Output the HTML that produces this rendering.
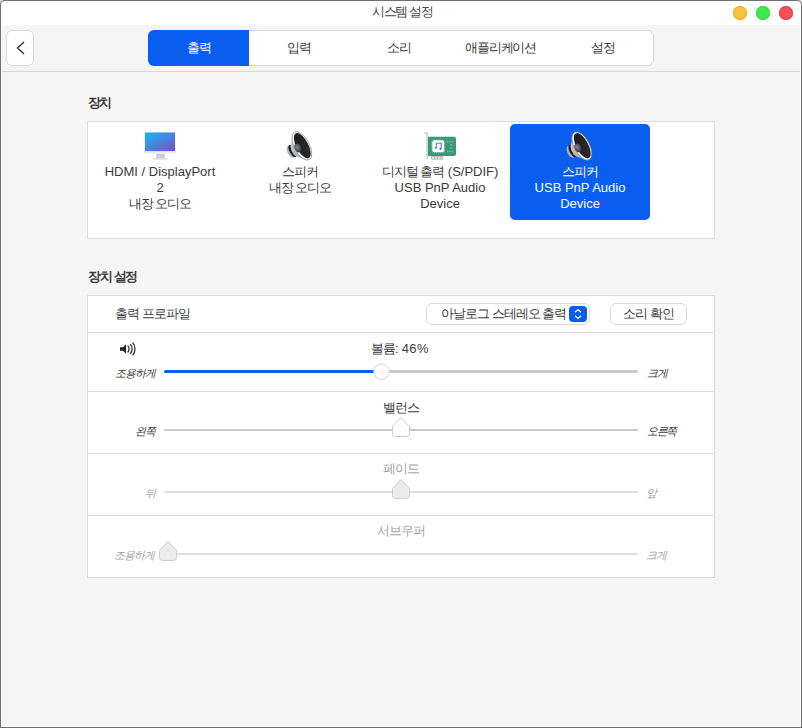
<!DOCTYPE html>
<html lang="ko">
<head>
<meta charset="utf-8">
<style>
*{box-sizing:border-box;margin:0;padding:0}
html,body{width:802px;height:728px;overflow:hidden;background:#d9d9d9}
body{font-family:"Liberation Sans",sans-serif;font-size:13px;color:#3a3a3a;position:relative}
.abs{position:absolute}
.t{position:absolute;white-space:nowrap;line-height:16px}
.k{letter-spacing:-1px}
.win{position:absolute;left:0;top:0;width:802px;height:728px;background:#707070;border-radius:5px 5px 0 0;overflow:hidden}
.inner{position:absolute;left:1px;top:1px;width:800px;height:726px;background:#fff;border-radius:4px 4px 0 0}
.content{position:absolute;left:2px;top:25px;width:798px;height:701px;background:#f5f5f5}
.dot{position:absolute;top:6px;width:14px;height:14px;border-radius:50%}
.hline{position:absolute;left:2px;top:71px;width:798px;height:1px;background:#d6d6d6}
.back{position:absolute;left:6px;top:30px;width:28px;height:36px;background:#fff;border:1px solid #dadada;border-radius:6px}
.tabs{position:absolute;left:148px;top:30px;width:506px;height:36px;background:#fff;border:1px solid #dadada;border-radius:6px;overflow:hidden}
.tabon{position:absolute;left:148px;top:30px;width:101px;height:36px;background:#095ef0;border-radius:6px 0 0 6px}
.box{position:absolute;left:87px;width:628px;background:#fff;border:1px solid #dcdcdc}
.sel{position:absolute;left:510px;top:124px;width:140px;height:96px;border-radius:5px;background:#095ef0}
.c{text-align:center}
.sep{position:absolute;left:88px;width:626px;height:1px;background:#dcdcdc}
.trk{position:absolute;left:164px;width:474px;border-radius:2px}
.gray{color:#a3a3a3}
.it{font-style:italic}
</style>
</head>
<body>
<div class="win">
 <div class="inner"></div>
 <div class="content"></div>
</div>
<div class="hline"></div>

<!-- title bar -->
<div class="t" style="left:372px;top:4px;font-size:13px;color:#4a4a4a;letter-spacing:-1.3px">시스템 설정</div>
<div class="dot" style="left:733px;background:#f8c13b;box-shadow:inset 0 0 0 1px #eeae2b"></div>
<div class="dot" style="left:756px;background:#3de84c;box-shadow:inset 0 0 0 1px #35d844"></div>
<div class="dot" style="left:779px;background:#f4505b;box-shadow:inset 0 0 0 1px #e6434e"></div>

<!-- header -->
<div class="back">
 <svg class="abs" style="left:-1px;top:-1px" width="28" height="36" viewBox="0 0 28 36"><path d="M18 12 L11.5 18 L18 24" fill="none" stroke="#2c2c2c" stroke-width="1.3" stroke-linecap="butt" stroke-linejoin="miter"/></svg>
</div>
<div class="tabs"></div><div class="tabon"></div>
<div class="t k c" style="left:148px;width:101px;top:40px;color:#fff">출력</div>
<div class="t k c" style="left:248px;width:101px;top:40px">입력</div>
<div class="t k c" style="left:348px;width:101px;top:40px">소리</div>
<div class="t c" style="left:450px;width:101px;top:40px;letter-spacing:-1.25px">애플리케이션</div>
<div class="t k c" style="left:552px;width:101px;top:40px">설정</div>

<!-- devices -->
<div class="t" style="left:88px;top:95px;font-weight:bold;letter-spacing:-2.2px">장치</div>
<div class="box" style="top:121px;height:118px"></div>
<div class="sel"></div>


<!-- device icons -->
<svg class="abs" style="left:0;top:0" width="802" height="728" viewBox="0 0 802 728">
 <defs>
  <linearGradient id="scr" x1="0" y1="0" x2="1" y2="1">
   <stop offset="0" stop-color="#16b6f6"/><stop offset="1" stop-color="#7c4fc6"/>
  </linearGradient>
  <linearGradient id="note" x1="0" y1="0" x2="1" y2="1">
   <stop offset="0" stop-color="#1aa6f4"/><stop offset="1" stop-color="#8a4ccc"/>
  </linearGradient>
  <radialGradient id="dome" cx="0.4" cy="0.4" r="0.7">
   <stop offset="0" stop-color="#85878b"/><stop offset="0.6" stop-color="#4c4e52"/><stop offset="1" stop-color="#26262a"/>
  </radialGradient>
  <linearGradient id="body" x1="0" y1="0" x2="1" y2="1">
   <stop offset="0" stop-color="#d0d2d8"/><stop offset="1" stop-color="#9fa1a8"/>
  </linearGradient>
  <symbol id="spk" viewBox="0 0 32 34">
   <ellipse cx="6.9" cy="23.8" rx="3.5" ry="6.5" transform="rotate(-28 6.9 23.8)" fill="#b3b5bc"/>
   <ellipse cx="8.4" cy="23" rx="2.9" ry="6.7" transform="rotate(-28 8.4 23)" fill="#1e1e20"/>
   <path d="M5.64 18.82 L8.15 7.73 L21.48 31.82 L11.30 28.41 Q10.0 27.8 8.6 26.2 Q6.2 22.8 5.64 18.82Z" fill="url(#body)" transform="translate(0.9 0)"/>
   <ellipse cx="17.8" cy="17.9" rx="7.6" ry="15.6" transform="rotate(-28 17.8 17.9)" fill="#f3f3f3" stroke="#8c8e94" stroke-width="0.7"/>
   <ellipse cx="18.3" cy="17.7" rx="6" ry="13.9" transform="rotate(-28 18.3 17.7)" fill="url(#cone)"/>
   <ellipse cx="14" cy="19.8" rx="3.4" ry="4.6" transform="rotate(-28 14 19.8)" fill="url(#dome)"/>
  </symbol>
  <linearGradient id="cone" x1="0" y1="0" x2="1" y2="1">
   <stop offset="0" stop-color="#19191b"/><stop offset="1" stop-color="#2e2e31"/>
  </linearGradient>
 </defs>
 <!-- monitor -->
 <rect x="144.3" y="131.8" width="31.4" height="22" rx="1.2" fill="#ececf0"/>
 <rect x="145" y="132.5" width="30" height="18.6" fill="url(#scr)"/>
 <rect x="156.2" y="153.7" width="8.8" height="4.4" fill="#cdd0d7"/>
 <rect x="153.2" y="158" width="14.5" height="1.8" rx="0.8" fill="#dcdee3"/>
 <!-- speakers -->
 <use href="#spk" x="284" y="128" width="32" height="34"/>
 <use href="#spk" x="564" y="128" width="32" height="34"/>
 <!-- sound card -->
 <path d="M424 132.2 H428 V159 H426.2 V134 H424 Z" fill="#d3d3da"/>
 <path d="M428 136.7 H454 Q456 136.7 456 138.7 V154 Q456 156 454 156 H428 Z" fill="#3b987a"/>
 <rect x="431" y="156" width="12" height="3.7" fill="#a9c7bb"/>
 <rect x="432" y="156.8" width="2" height="2" fill="#d9e6e0"/><rect x="435" y="156.8" width="2" height="2" fill="#d9e6e0"/><rect x="438" y="156.8" width="2" height="2" fill="#d9e6e0"/><rect x="441" y="156.8" width="1.5" height="2" fill="#d9e6e0"/>
 <rect x="431.6" y="139.6" width="13.2" height="13.2" rx="2" fill="none" stroke="#7fd0a4" stroke-width="0.8" stroke-dasharray="1 1"/>
 <rect x="432.3" y="140.3" width="11.9" height="11.9" rx="2" fill="#fff"/>
 <path d="M436.4 148 V143.2 H441.2 V148.8" fill="none" stroke="url(#note)" stroke-width="1.1"/>
 <circle cx="435.6" cy="147.8" r="1.1" fill="#1aa6f4"/>
 <circle cx="440.4" cy="148.8" r="1.1" fill="#8a4ccc"/>
 <g fill="#6cc29a">
  <rect x="447" y="141" width="1.3" height="1.6"/><rect x="449.3" y="141" width="1.3" height="1.6"/><rect x="451.6" y="141" width="1.3" height="1.6"/>
  <rect x="450" y="144.3" width="2.2" height="1.3"/><rect x="450" y="147.5" width="2.2" height="1.3"/>
  <rect x="447" y="150.6" width="1.3" height="1.6"/><rect x="449.3" y="150.6" width="1.3" height="1.6"/><rect x="451.6" y="150.6" width="1.3" height="1.6"/>
 </g>
</svg>

<div class="t c" style="left:90px;width:140px;top:164px">HDMI / DisplayPort<br>2<br><span class="k">내장 오디오</span></div>
<div class="t c k" style="left:230px;width:140px;top:164px">스피커<br>내장 오디오</div>
<div class="t c" style="left:370px;width:140px;top:164px"><span class="k">디지털 출력</span> (S/PDIF)<br>USB PnP Audio<br>Device</div>
<div class="t c" style="left:510px;width:140px;top:164px;color:#fff"><span class="k">스피커</span><br>USB PnP Audio<br>Device</div>

<!-- settings -->
<div class="t" style="left:88px;top:269px;font-weight:bold;letter-spacing:-1.35px">장치 설정</div>
<div class="box" style="top:295px;height:283px"></div>
<div class="sep" style="top:332px"></div>
<div class="sep" style="top:391px"></div>
<div class="sep" style="top:453px"></div>
<div class="sep" style="top:515px"></div>

<div class="t k" style="left:115px;top:306px">출력 프로파일</div>
<div class="abs" style="left:426px;top:303px;width:164px;height:22px;border:1px solid #dadada;border-radius:6px;background:#fff"></div>
<div class="t k" style="left:441px;top:306px">아날로그 스테레오 출력</div>
<div class="abs" style="left:569px;top:306px;width:18px;height:16px;border-radius:4px;background:#095ef0">
 <svg class="abs" style="left:0;top:0" width="18" height="16" viewBox="0 0 18 16"><path d="M6 6.2 L9 3.6 L12 6.2 M6 9.8 L9 12.4 L12 9.8" fill="none" stroke="#fff" stroke-width="1.2"/></svg>
</div>
<div class="abs" style="left:610px;top:303px;width:77px;height:22px;border:1px solid #dadada;border-radius:6px;background:#fff"></div>
<div class="t k" style="left:623px;top:306px">소리 확인</div>

<!-- volume -->
<svg class="abs" style="left:116px;top:338px" width="24" height="22" viewBox="0 0 24 22">
 <path d="M4 9.2 H7 L10 6.2 V15.8 L7 12.8 H4 Z" fill="#222"/>
 <path d="M11.6 7.6 A4.6 4.6 0 0 1 11.6 14.4" fill="none" stroke="#222" stroke-width="1.2"/>
 <path d="M14.2 6.2 A7 7 0 0 1 14.2 15.8" fill="none" stroke="#222" stroke-width="1.2"/>
 <path d="M16.6 4.6 A9.6 9.6 0 0 1 16.6 17.4" fill="none" stroke="#222" stroke-width="1.2"/>
</svg>
<div class="t" style="left:371px;top:341px"><span class="k">볼륨:</span><span style="letter-spacing:0.4px"> 46%</span></div>
<div class="t k it" style="left:115px;top:365px;font-size:11px">조용하게</div>
<div class="trk" style="top:370px;height:3px;background:#c9c9c9"></div>
<div class="trk" style="top:370px;height:3px;width:218px;background:#095ef0"></div>
<svg class="abs" style="left:360px;top:350px" width="44" height="44" viewBox="360 350 44 44"><circle cx="381.5" cy="372.3" r="8.2" fill="rgba(0,0,0,0.05)"/><circle cx="381.5" cy="371.6" r="7.7" fill="#fff" stroke="#d8d8d8" stroke-width="1"/></svg>
<div class="t k it" style="left:647px;top:365px;font-size:11px">크게</div>

<!-- balance -->
<div class="t k" style="left:383px;top:400px">밸런스</div>
<div class="t k it" style="left:135px;top:423px;font-size:11px">왼쪽</div>
<div class="trk" style="top:429px;height:2px;background:#c9c9c9"></div>
<svg class="abs" style="left:391px;top:416px" width="20" height="22" viewBox="0 0 20 22"><path d="M10 1.5 L18.5 10.5 V17.5 Q18.5 20.5 15.5 20.5 H4.5 Q1.5 20.5 1.5 17.5 V10.5 Z" fill="#fff" stroke="#cdcdcd" stroke-width="1"/></svg>
<div class="t it" style="left:647px;top:423px;font-size:11px;letter-spacing:-1.5px">오른쪽</div>

<!-- fade -->
<div class="t k gray" style="left:383px;top:461px">페이드</div>
<div class="t k it gray" style="left:145px;top:485px;font-size:11px">뒤</div>
<div class="trk" style="top:491px;height:2px;background:#dedede"></div>
<svg class="abs" style="left:391px;top:478px" width="20" height="22" viewBox="0 0 20 22"><path d="M10 1.5 L18.5 10.5 V17.5 Q18.5 20.5 15.5 20.5 H4.5 Q1.5 20.5 1.5 17.5 V10.5 Z" fill="#ebebeb" stroke="#cdcdcd" stroke-width="1"/></svg>
<div class="t k it gray" style="left:646px;top:485px;font-size:11px">앞</div>

<!-- subwoofer -->
<div class="t k gray" style="left:377px;top:523px">서브우퍼</div>
<div class="t k it gray" style="left:114px;top:547px;font-size:11px">조용하게</div>
<div class="trk" style="top:553px;height:2px;background:#dedede"></div>
<svg class="abs" style="left:158px;top:540px" width="20" height="22" viewBox="0 0 20 22"><path d="M10 1.5 L18.5 10.5 V17.5 Q18.5 20.5 15.5 20.5 H4.5 Q1.5 20.5 1.5 17.5 V10.5 Z" fill="#ebebeb" stroke="#cdcdcd" stroke-width="1"/></svg>
<div class="t k it gray" style="left:646px;top:547px;font-size:11px">크게</div>

</body>
</html>
